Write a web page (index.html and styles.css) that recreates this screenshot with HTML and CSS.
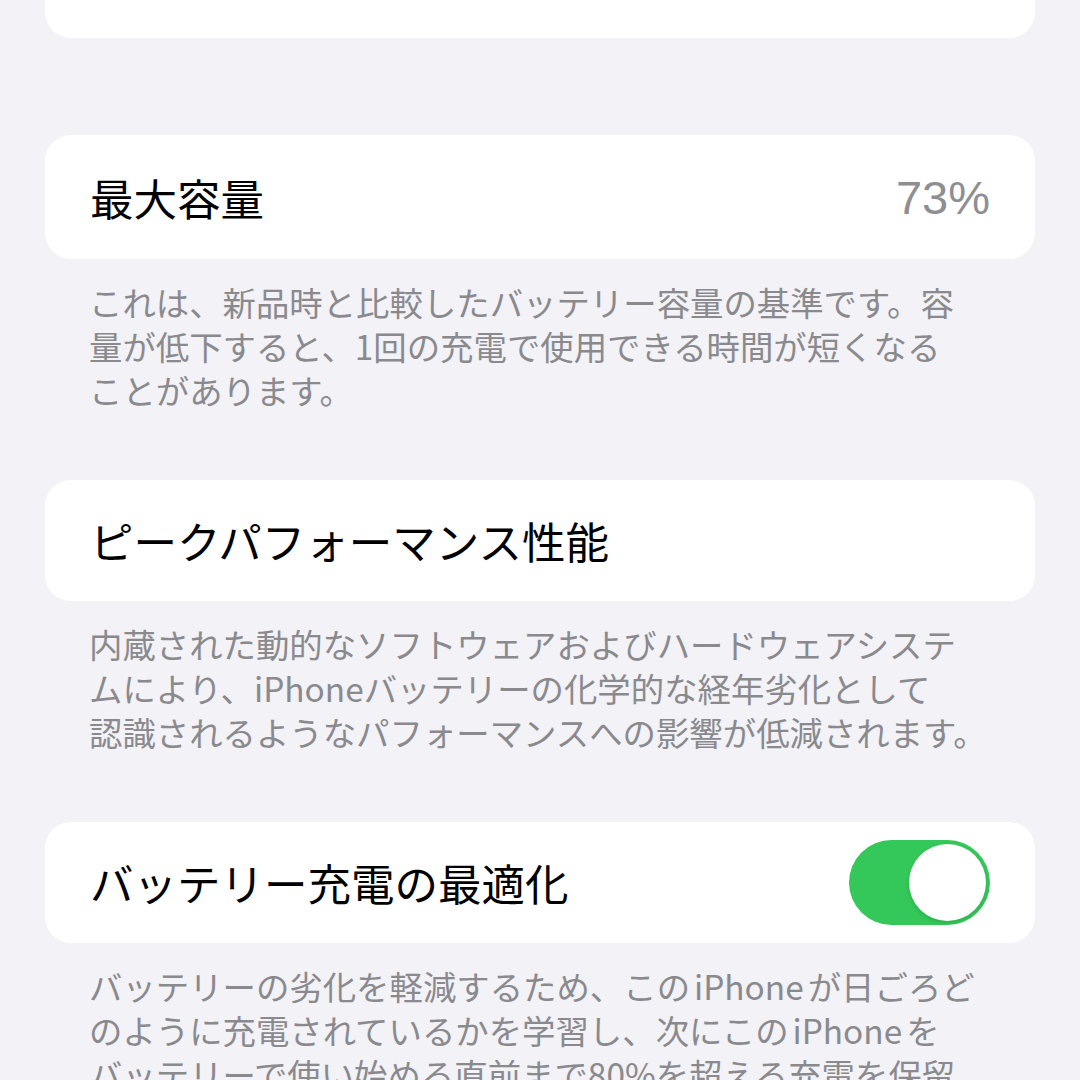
FILE: index.html
```html
<!DOCTYPE html>
<html lang="ja">
<head>
<meta charset="utf-8">
<link rel="stylesheet" href="styles.css">
</head>
<body>
  <div class="screen">
    <section class="card card-top"></section>

    <section class="card card-first">
      <span class="title">最大容量</span>
      <span class="value">73%</span>
    </section>
    <p class="footnote">これは、新品時と比較したバッテリー容量の基準です。容<br>量が低下すると、1回の充電で使用できる時間が短くなる<br>ことがあります。</p>

    <section class="card">
      <span class="title">ピークパフォーマンス性能</span>
    </section>
    <p class="footnote">内蔵された動的なソフトウェアおよびハードウェアシステ<br>ムにより、iPhoneバッテリーの化学的な経年劣化として<br>認識されるようなパフォーマンスへの影響が低減されます。</p>

    <section class="card">
      <span class="title">バッテリー充電の最適化</span>
      <div class="toggle on"><div class="knob"></div></div>
    </section>
    <p class="footnote">バッテリーの劣化を軽減するため、この<span class="latin">iPhone</span>が日ごろど<br>のように充電されているかを学習し、次にこの<span class="latin">iPhone</span>を<br>バッテリーで使い始める直前まで80%を超える充電を保留<br>します。</p>
  </div>
</body>
</html>
```

FILE: styles.css
```css
* {
    margin: 0;
    padding: 0;
    box-sizing: border-box;
}
body
{
    background: #f2f2f7;
    font-family: "Noto Sans CJK JP", "Noto Sans", sans-serif;
    overflow: hidden;
}
.screen
{
    padding: 0 45px;
}
.card
{
    display: flex;
    align-items: center;
    justify-content: space-between;
    height: 121px;
    padding: 0 45px;
    background: #ffffff;
    border-radius: 26px;
    margin-top: 68px;
}
.card-top
{
    height: 100px;
    margin-top: -62px;
}
.card-first
{
    margin-top: 97px;
    height: 124px;
}
.title
{
    font-size: 43.5px;
    color: #000000;
}
.value
{
    font-size: 47px;
    color: #8e8e93;
    font-family: "Liberation Sans", "Noto Sans CJK JP", sans-serif;
}
.footnote
{
    margin-top: 21px;
    padding: 0 45px 0 44px;
    font-size: 33.4px;
    line-height: 44px;
    color: #8a8a8e;
    white-space: nowrap;
}
.latin
{
    margin: 0 4px;
}
.toggle
{
    width: 141px;
    height: 85px;
    border-radius: 43px;
    background: #e9e9eb;
    padding: 4px;
    display: flex;
}
.toggle.on
{
    background: #34c759;
    justify-content: flex-end;
}
.knob
{
    width: 77px;
    height: 77px;
    border-radius: 50%;
    background: #ffffff;
    box-shadow: 0 2px 4px rgba(0, 0, 0, 0.12);
}
```
